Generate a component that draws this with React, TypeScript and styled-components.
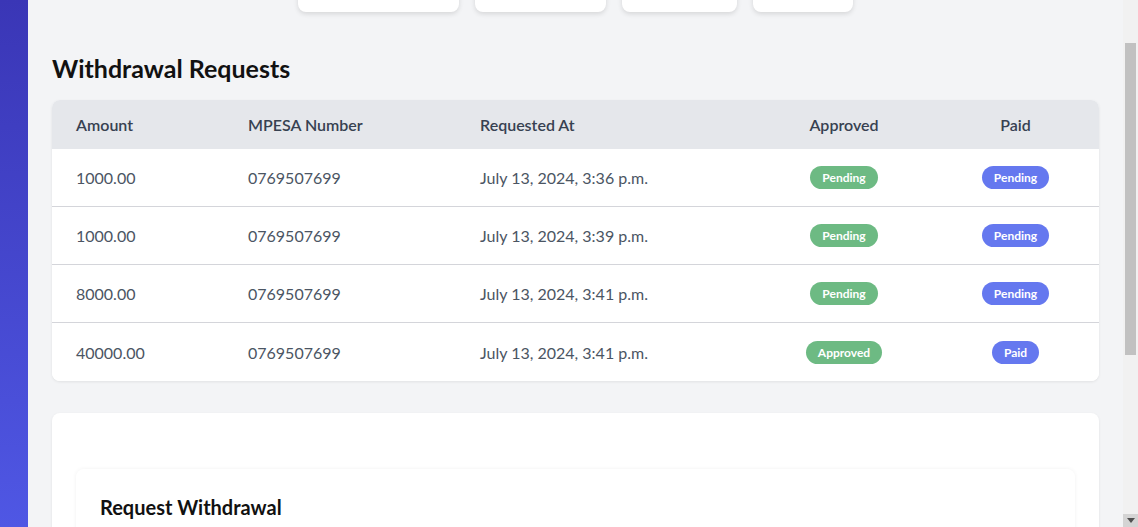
import { useLayoutEffect, useRef } from 'react';
import styled, { createGlobalStyle } from 'styled-components';

const GlobalStyle = createGlobalStyle`
  html, body {
    margin: 0;
    padding: 0;
    background: #f3f4f6;
    font-family: Lato, "Noto Sans", sans-serif;
    color: #111827;
  }
  * { box-sizing: border-box; }
`;

const Shell = styled.div`
  display: flex;
  height: 100vh;
  overflow: hidden;
`;

const Sidebar = styled.aside`
  flex: 0 0 28px;
  background: linear-gradient(to bottom, #3a36b6, #4f57e4);
`;

const Main = styled.main`
  flex: 1;
  overflow-y: auto;
  scrollbar-width: none;
  &::-webkit-scrollbar { display: none; }
`;

const Content = styled.div`
  padding: 20px 24px 24px;
  display: flex;
  flex-direction: column;
`;

const ScrollTrack = styled.div`
  flex: 0 0 15px;
  display: flex;
  flex-direction: column;
  background: #f1f1f1;
  padding-top: 43px;
`;

const ScrollThumb = styled.div`
  height: 312px;
  margin: 0 2px;
  background: #c1c1c1;
`;

const ScrollArrow = styled.div`
  margin-top: auto;
  height: 13px;
  display: flex;
  align-items: center;
  justify-content: center;
  background: #d4d4d4;
`;

const NavRow = styled.div`
  display: flex;
  justify-content: center;
  gap: 16px;
`;

const NavCard = styled.div<{ $w: number }>`
  width: ${(p) => p.$w}px;
  height: 39px;
  background: #fff;
  border-radius: 8px;
  box-shadow: 0 2px 5px rgba(0, 0, 0, 0.12);
`;

const Heading = styled.h2`
  margin: 40px 0 16px;
  font-size: 25px;
  line-height: 32px;
  font-weight: 700;
  color: #111;
`;

const TableCard = styled.div`
  background: #fff;
  border-radius: 8px;
  overflow: hidden;
  box-shadow: 0 1px 3px rgba(0, 0, 0, 0.08);
`;

const Row = styled.div<{ $head?: boolean }>`
  display: grid;
  grid-template-columns: 172px 232px 300px 176px 1fr;
  align-items: center;
  height: ${(p) => (p.$head ? 49 : 58)}px;
  background: ${(p) => (p.$head ? '#e5e7eb' : '#fff')};
  border-bottom: ${(p) => (p.$head ? 'none' : '1px solid #d4d5da')};
  &:last-child { border-bottom: none; }
`;

const Cell = styled.div<{ $center?: boolean; $head?: boolean }>`
  padding: 0 24px;
  text-align: ${(p) => (p.$center ? 'center' : 'left')};
  font-size: 16px;
  font-weight: ${(p) => (p.$head ? 600 : 400)};
  color: ${(p) => (p.$head ? '#374151' : '#4b5563')};
`;

const Badge = styled.span<{ $tone: 'green' | 'blue' }>`
  display: inline-block;
  padding: 3px 12px;
  border-radius: 999px;
  font-size: 12px;
  line-height: 17px;
  font-weight: 700;
  color: #fff;
  background: ${(p) => (p.$tone === 'green' ? '#6dba83' : '#6578ef')};
`;

const FormCard = styled.div`
  margin-top: 32px;
  background: #fff;
  border-radius: 8px;
  padding: 56px 24px 24px;
  box-shadow: 0 1px 3px rgba(0, 0, 0, 0.08);
`;

const InnerCard = styled.div`
  background: #fff;
  border-radius: 8px;
  padding: 24px;
  box-shadow: 0 0 4px rgba(0, 0, 0, 0.06);
`;

const FormTitle = styled.h3`
  margin: 0 0 20px;
  font-size: 20px;
  line-height: 28px;
  font-weight: 700;
  color: #111;
`;

const Field = styled.label`
  display: flex;
  flex-direction: column;
  gap: 6px;
  margin-bottom: 16px;
  font-size: 14px;
  color: #374151;
`;

const Input = styled.input`
  height: 40px;
  border: 1px solid #d1d5db;
  border-radius: 6px;
  padding: 0 12px;
  font: inherit;
`;

const Submit = styled.button`
  height: 40px;
  padding: 0 20px;
  border: none;
  border-radius: 6px;
  background: #4f46e5;
  color: #fff;
  font: inherit;
  font-weight: 600;
`;

const requests = [
  { amount: '1000.00', phone: '0769507699', at: 'July 13, 2024, 3:36 p.m.', approved: false, paid: false },
  { amount: '1000.00', phone: '0769507699', at: 'July 13, 2024, 3:39 p.m.', approved: false, paid: false },
  { amount: '8000.00', phone: '0769507699', at: 'July 13, 2024, 3:41 p.m.', approved: false, paid: false },
  { amount: '40000.00', phone: '0769507699', at: 'July 13, 2024, 3:41 p.m.', approved: true, paid: true },
];

export default function App() {
  const mainRef = useRef<HTMLElement>(null);

  useLayoutEffect(() => {
    if (mainRef.current) mainRef.current.scrollTop = 47;
  }, []);

  return (
    <Shell>
      <GlobalStyle />
      <Sidebar />
      <Main ref={mainRef}>
        <Content>
          <NavRow>
            <NavCard $w={161} />
            <NavCard $w={131} />
            <NavCard $w={115} />
            <NavCard $w={100} />
          </NavRow>

          <Heading>Withdrawal Requests</Heading>
          <TableCard>
            <Row $head>
              <Cell $head>Amount</Cell>
              <Cell $head>MPESA Number</Cell>
              <Cell $head>Requested At</Cell>
              <Cell $head $center>Approved</Cell>
              <Cell $head $center>Paid</Cell>
            </Row>
            {requests.map((r, i) => (
              <Row key={i}>
                <Cell>{r.amount}</Cell>
                <Cell>{r.phone}</Cell>
                <Cell>{r.at}</Cell>
                <Cell $center>
                  <Badge $tone="green">{r.approved ? 'Approved' : 'Pending'}</Badge>
                </Cell>
                <Cell $center>
                  <Badge $tone="blue">{r.paid ? 'Paid' : 'Pending'}</Badge>
                </Cell>
              </Row>
            ))}
          </TableCard>

          <FormCard>
            <InnerCard>
              <FormTitle>Request Withdrawal</FormTitle>
              <Field>
                Amount
                <Input type="number" />
              </Field>
              <Field>
                MPESA Number
                <Input type="text" />
              </Field>
              <Submit>Submit</Submit>
            </InnerCard>
          </FormCard>
        </Content>
      </Main>
      <ScrollTrack>
        <ScrollThumb />
        <ScrollArrow>
          <svg width="8" height="5" viewBox="0 0 8 5">
            <path d="M0 0h8L4 5z" fill="#505050" />
          </svg>
        </ScrollArrow>
      </ScrollTrack>
    </Shell>
  );
}
